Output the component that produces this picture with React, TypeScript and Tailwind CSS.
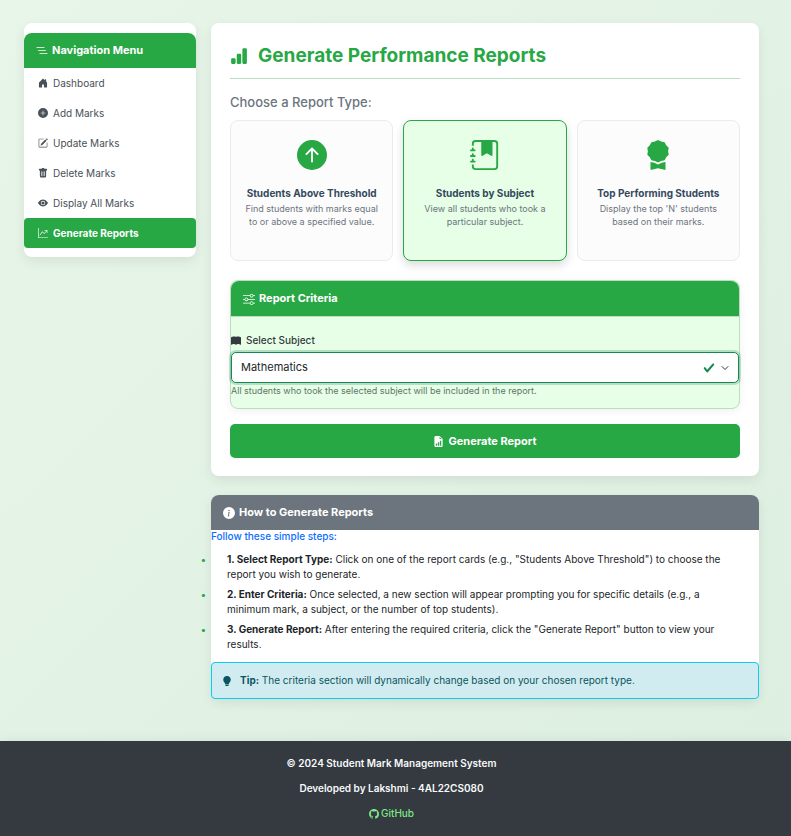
import { useState } from "react";
import type { ReactNode } from "react";
import type { IconType } from "react-icons";
import {
  BsArrowUpCircleFill,
  BsAwardFill,
  BsBarChartFill,
  BsBookFill,
  BsEyeFill,
  BsFileEarmarkBarGraphFill,
  BsGithub,
  BsGraphUpArrow,
  BsHouseDoorFill,
  BsInfoCircleFill,
  BsJournalBookmarkFill,
  BsLightbulbFill,
  BsListNested,
  BsPencilSquare,
  BsPlusCircleFill,
  BsSliders,
  BsTrashFill,
} from "react-icons/bs";

const navItems: { label: string; Icon: IconType; active?: boolean }[] = [
  { label: "Dashboard", Icon: BsHouseDoorFill },
  { label: "Add Marks", Icon: BsPlusCircleFill },
  { label: "Update Marks", Icon: BsPencilSquare },
  { label: "Delete Marks", Icon: BsTrashFill },
  { label: "Display All Marks", Icon: BsEyeFill },
  { label: "Generate Reports", Icon: BsGraphUpArrow, active: true },
];

const reportTypes: { id: string; title: string; text: string; Icon: IconType }[] = [
  {
    id: "threshold",
    title: "Students Above Threshold",
    text: "Find students with marks equal to or above a specified value.",
    Icon: BsArrowUpCircleFill,
  },
  {
    id: "subject",
    title: "Students by Subject",
    text: "View all students who took a particular subject.",
    Icon: BsJournalBookmarkFill,
  },
  {
    id: "top",
    title: "Top Performing Students",
    text: "Display the top 'N' students based on their marks.",
    Icon: BsAwardFill,
  },
];

const steps = [
  {
    title: "1. Select Report Type:",
    text: 'Click on one of the report cards (e.g., "Students Above Threshold") to choose the report you wish to generate.',
  },
  {
    title: "2. Enter Criteria:",
    text: "Once selected, a new section will appear prompting you for specific details (e.g., a minimum mark, a subject, or the number of top students).",
  },
  {
    title: "3. Generate Report:",
    text: 'After entering the required criteria, click the "Generate Report" button to view your results.',
  },
];

function PanelHeader({ Icon, className, children }: { Icon: IconType; className: string; children: ReactNode }) {
  return (
    <h2 className={`flex h-[35px] items-center gap-1 rounded-t-lg px-3 text-[11px] font-bold text-white ${className}`}>
      <Icon className="size-3 shrink-0" />
      {children}
    </h2>
  );
}

function Sidebar() {
  return (
    <aside className="w-[172px] shrink-0 rounded-lg bg-white pt-2.5 pb-[9px] shadow-[0_4px_12px_rgba(0,0,0,0.08)]">
      <PanelHeader Icon={BsListNested} className="bg-[#28a745]">
        Navigation Menu
      </PanelHeader>
      <nav>
        {navItems.map(({ label, Icon, active }) => (
          <a
            key={label}
            href="#"
            aria-current={active ? "page" : undefined}
            className={`flex h-[30px] items-center gap-[5px] px-3.5 ${
              active ? "rounded bg-[#28a745] font-bold text-white" : "text-[#495057]"
            }`}
          >
            <Icon className="size-2.5 shrink-0" />
            {label}
          </a>
        ))}
      </nav>
    </aside>
  );
}

function SubjectSelect() {
  return (
    <div className="relative">
      <select
        id="subject"
        defaultValue="Mathematics"
        className="block h-[31px] w-full appearance-none rounded-[5px] border border-[#198754] bg-white px-[9px] text-[11px] text-[#212529] shadow-[0_0_0_2px_rgba(25,135,84,0.25)] outline-none"
      >
        <option>Mathematics</option>
        <option>Science</option>
        <option>English</option>
      </select>
      <div className="pointer-events-none absolute inset-y-0 right-2.5 flex items-center gap-1.5">
        <svg viewBox="0 0 8 8" className="size-3" aria-hidden="true">
          <path
            fill="#198754"
            d="M2.3 6.73.6 4.53c-.4-1.04.46-1.4 1.1-.8l1.1 1.4 3.4-3.8c.6-.63 1.6-.27 1.2.7l-4 4.6c-.43.5-.8.4-1.1.1z"
          />
        </svg>
        <svg viewBox="0 0 16 16" className="size-2" aria-hidden="true">
          <path fill="none" stroke="#343a40" strokeLinecap="round" strokeLinejoin="round" strokeWidth="2" d="m2 5 6 6 6-6" />
        </svg>
      </div>
    </div>
  );
}

function ReportForm() {
  const [selected, setSelected] = useState("subject");
  return (
    <form
      onSubmit={(e) => e.preventDefault()}
      className="rounded-lg bg-white px-[19px] pt-[19px] pb-[18px] shadow-[0_4px_12px_rgba(0,0,0,0.08)]"
    >
      <h1 className="flex items-center gap-2.5 border-b border-[#b8dfc1] pb-[9px] text-[19px] leading-[27px] font-bold text-[#28a745]">
        <BsBarChartFill className="size-[18px] shrink-0" />
        Generate Performance Reports
      </h1>
      <p className="mt-[14px] mb-[9px] text-[13px] leading-[18px] font-medium text-[#6c757d]">Choose a Report Type:</p>
      <div className="grid grid-cols-3 gap-2.5">
        {reportTypes.map(({ id, title, text, Icon }) => (
          <button
            key={id}
            type="button"
            aria-pressed={selected === id}
            onClick={() => setSelected(id)}
            className={`flex min-h-[141px] flex-col items-center rounded-lg border px-2.5 pt-[19px] pb-4 ${
              selected === id
                ? "border-[#28a745] bg-[#e6ffe6] shadow-[0_4px_10px_rgba(0,0,0,0.15)]"
                : "border-[#e9ecef] bg-[#fcfcfc]"
            }`}
          >
            <Icon className="size-[30px] text-[#28a745]" />
            <span className="mt-4 text-[10px] leading-[15px] font-bold whitespace-nowrap text-[#34495e]">{title}</span>
            <span className="mt-px px-1 text-[9px] leading-[13px] text-[#6c757d]">{text}</span>
          </button>
        ))}
      </div>
      <section className="mt-[19px] rounded-lg border border-[#b8dfc1] bg-[#e6ffe6] shadow-[0_2px_8px_rgba(0,0,0,0.06)]">
        <PanelHeader Icon={BsSliders} className="bg-[#28a745]">
          Report Criteria
        </PanelHeader>
        <div className="border-t border-[#b8dfc1] pt-4 pb-[11px]">
          <label htmlFor="subject" className="mb-1 flex items-center gap-[5px] font-medium text-[#343a40]">
            <BsBookFill className="size-2.5" />
            Select Subject
          </label>
          <SubjectSelect />
          <p className="mt-px text-[9px] leading-[13px] text-[#5f7566]">
            All students who took the selected subject will be included in the report.
          </p>
        </div>
      </section>
      <button
        type="submit"
        className="mt-[15px] flex h-[34px] w-full items-center justify-center gap-1 rounded-[5px] bg-[#28a745] text-[11px] font-bold text-white"
      >
        <BsFileEarmarkBarGraphFill className="size-[11px]" />
        Generate Report
      </button>
    </form>
  );
}

function HelpPanel() {
  return (
    <section className="mt-[19px] rounded-lg bg-white shadow-[0_4px_12px_rgba(0,0,0,0.08)]">
      <PanelHeader Icon={BsInfoCircleFill} className="bg-[#6c757d]">
        How to Generate Reports
      </PanelHeader>
      <p className="leading-3 font-medium text-[#0d6efd]">Follow these simple steps:</p>
      <ul className="mt-2.5 mb-2.5 -ml-2.5 flex flex-col gap-[5px] pr-4">
        {steps.map((step) => (
          <li key={step.title} className="flex">
            <span aria-hidden="true" className="w-[26px] shrink-0 font-bold text-[#28a745]">
              •
            </span>
            <span>
              <strong className="font-bold">{step.title}</strong> {step.text}
            </span>
          </li>
        ))}
      </ul>
      <p className="flex min-h-[37px] items-center gap-2 rounded border border-[#0dcaf0] bg-[#d1ecf1] px-2.5 text-[#0c5460]">
        <BsLightbulbFill className="size-2.5 shrink-0" />
        <span>
          <strong className="font-bold">Tip:</strong> The criteria section will dynamically change based on your chosen
          report type.
        </span>
      </p>
    </section>
  );
}

export default function App() {
  return (
    <div className="flex min-h-screen flex-col bg-linear-135 from-[#e8f5e9] to-[#dcefe0] font-[Inter,'Open_Sans',sans-serif] text-[10px] leading-[15px] text-[#212529]">
      <div className="flex flex-1 items-start gap-[15px] pt-[23px] pr-8 pb-[42px] pl-6">
        <Sidebar />
        <main className="min-w-0 flex-1">
          <ReportForm />
          <HelpPanel />
        </main>
      </div>
      <footer className="flex flex-col items-center gap-2.5 bg-[#343a40] pt-[15px] pr-2 pb-[15px] font-semibold text-[#f8f9fa] shadow-[0_-2px_10px_rgba(0,0,0,0.06)]">
        <p>© 2024 Student Mark Management System</p>
        <p>Developed by Lakshmi - 4AL22CS080</p>
        <a href="#" className="flex items-center gap-0.5 font-medium text-[#7ee787]">
          <BsGithub className="size-2.5" />
          GitHub
        </a>
      </footer>
    </div>
  );
}
